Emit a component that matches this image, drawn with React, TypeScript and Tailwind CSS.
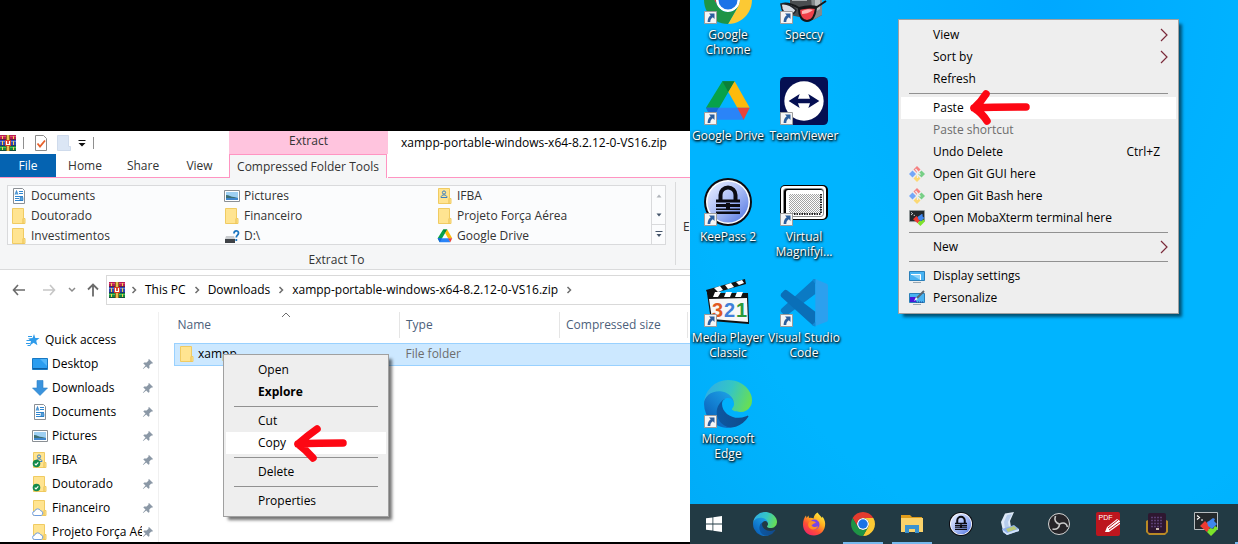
import React from "react";

type Children = { children?: React.ReactNode };

/* ---------- brand drawings ---------- */

function ChromeLogo({ className }: { className: string }) {
  return (
    <svg viewBox="0 0 48 48" className={className} aria-hidden="true">
      <circle cx="24" cy="24" r="12" fill="#fff" />
      <path d="M24 12h20.78a24 24 0 0 0-41.56 0L13.6 30A12 12 0 0 1 24 12z" fill="#e33b2e" />
      <circle cx="24" cy="24" r="9.5" fill="#1a73e8" />
      <path d="M34.39 30 24 48a24 24 0 0 0 20.78-36H24a12 12 0 0 1 10.39 18z" fill="#fcc934" />
      <path d="M13.6 30 3.22 12A24 24 0 0 0 24 48l10.39-18a12 12 0 0 1-20.78 0z" fill="#1e9445" />
    </svg>
  );
}

function EdgeLogo({ className }: { className: string }) {
  const id = React.useId();
  return (
    <svg viewBox="0 0 256 256" className={className} aria-hidden="true">
      <defs>
        <linearGradient id={id + "a"} x1="63" y1="178" x2="241" y2="178" gradientUnits="userSpaceOnUse">
          <stop offset="0" stopColor="#0c59a4" />
          <stop offset="1" stopColor="#114a8b" />
        </linearGradient>
        <linearGradient id={id + "b"} x1="157" y1="100" x2="46" y2="220" gradientUnits="userSpaceOnUse">
          <stop offset="0" stopColor="#1b9de2" />
          <stop offset=".5" stopColor="#1482d3" />
          <stop offset="1" stopColor="#0b66bd" />
        </linearGradient>
        <linearGradient id={id + "c"} x1="10" y1="60" x2="250" y2="150" gradientUnits="userSpaceOnUse">
          <stop offset="0" stopColor="#30aee5" />
          <stop offset=".5" stopColor="#35c6c4" />
          <stop offset="1" stopColor="#6ce04c" />
        </linearGradient>
      </defs>
      <g transform="translate(-4.6 -4.9)">
        <path fill={`url(#${id}a)`} d="M235.7 195.5a94 94 0 0 1-10.6 4.7 102 102 0 0 1-35.9 6.4c-47.3 0-88.5-32.5-88.5-74.3a31.5 31.5 0 0 1 16.4-27.2c-42.8 1.8-53.8 46.4-53.8 72.5 0 73.9 68.1 81.4 82.8 81.4 7.9 0 19.8-2.3 27-4.6l1.3-.4a128 128 0 0 0 66.6-52.8 4 4 0 0 0-5.3-5.7z" />
        <path fill={`url(#${id}b)`} d="M110.3 246.3A79 79 0 0 1 87.6 225a80.7 80.7 0 0 1 29.5-119.9c3.1-1.4 8.5-4.1 15.6-4a32.4 32.4 0 0 1 25.7 13 31.9 31.9 0 0 1 6.3 18.7c0-.2 24.5-79.6-80-79.6-43.9 0-80 41.7-80 78.2a130 130 0 0 0 12.1 56 128 128 0 0 0 156.4 67.1 75.6 75.6 0 0 1-62.8-8z" />
        <path fill={`url(#${id}c)`} d="M156.9 153.8c-.8 1-3.3 2.5-3.3 5.6 0 2.7 1.7 5.2 4.8 7.3 14.3 10 41.4 8.7 41.5 8.7a59.6 59.6 0 0 0 30.3-8.4 61.4 61.4 0 0 0 30.4-52.9c.3-22.4-8-37.3-11.3-43.9C228.1 28.8 182.4 4.9 132.6 4.9a128 128 0 0 0-128 126.2c.5-36.5 36.8-66 80-66 3.5 0 23.5.3 42 10 16.4 8.6 24.900 19 30.900 29.300 6.100 10.600 7.200 24.100 7.200 29.500s-2.700 13.300-7.800 19.900z" />
      </g>
    </svg>
  );
}

function DriveLogo({ className }: { className: string }) {
  return (
    <svg viewBox="0 0 144 144" className={className} aria-hidden="true">
      <path d="M55 13h37L73 45 25 128 6 92z" fill="#07a24a" />
      <path d="M55 13h37L73 45z" fill="#0b8038" />
      <path d="M92 13l45 79h-37L73 45z" fill="#fdba0b" />
      <path d="M6 92h98l16 36H25z" fill="#2a84f8" />
      <path d="M100 92h37l-18 36z" fill="#e9443a" />
      <path d="M6 92h38l-19 36z" fill="#1769d6" />
    </svg>
  );
}

function KeePassLogo({ className }: { className: string }) {
  const id = React.useId();
  return (
    <svg viewBox="0 0 48 48" className={className} aria-hidden="true">
      <defs>
        <linearGradient id={id} x1="0" y1="0" x2="1" y2="1">
          <stop offset="0" stopColor="#eef2ff" />
          <stop offset=".5" stopColor="#a9bcf6" />
          <stop offset="1" stopColor="#4f73e0" />
        </linearGradient>
      </defs>
      <circle cx="24" cy="24" r="24" fill="#0b0b12" />
      <circle cx="24" cy="24" r="22" fill="#fff" />
      <circle cx="24" cy="24" r="20.5" fill={`url(#${id})`} />
      <path d="M16.5 22v-5a7.5 7.5 0 0 1 15 0v5" fill="none" stroke="#0b0b12" strokeWidth="4" />
      <path d="M12 21.5h24v3H12zM12 26h10v3H12zM26 26h10v3H26zM12 30.5h24v1.5H12zM12 33.5h24v2.5H12zM22 25h4v6h-4z" fill="#0b0b12" />
    </svg>
  );
}

function SpeccyLogo({ className }: { className: string }) {
  return (
    <svg viewBox="0 0 48 48" className={className} aria-hidden="true">
      <path d="M10 6h24l8 6v27l-9 5-23-5z" fill="#4a4d50" />
      <path d="M30 10l12 2v27l-9 5z" fill="#85898c" />
      <path d="M12 16h15v4H12zM12 23h15v2H12z" fill="#a7abae" />
      <path d="M35 14l5 1v18l-5 3z" fill="#b9bcbe" />
      <path d="M2 28c4-1 10 0 17 4 7-2 14-2 18-1l9-6" fill="none" stroke="#17191c" strokeWidth="2" />
      <path d="M1 28c5-1 10 1 15 6-2 6-12 5-14-1z" fill="#d7dde6" stroke="#20242a" strokeWidth="1.5" />
      <path d="M19 33c7-2 12-2 17-1-1 8-4 13-9 13s-8-5-8-12z" fill="#f0404a" stroke="#15171a" strokeWidth="2" />
      <path d="M22 35c5-2 8-2 11-1-4 3-8 4-11 4z" fill="#ffb7b7" />
    </svg>
  );
}

function TeamViewerLogo({ className }: { className: string }) {
  return (
    <svg viewBox="0 0 144 144" className={className} aria-hidden="true">
      <rect width="144" height="144" rx="14" fill="#050f52" />
      <circle cx="72" cy="72" r="59" fill="#fff" />
      <path d="M26 72l33-21-5 14h36l-5-14 33 21-33 21 5-14H54l5 14z" fill="#050f52" />
    </svg>
  );
}

function MagnifierLogo({ className }: { className: string }) {
  const id = React.useId();
  return (
    <svg viewBox="0 0 48 48" className={className} aria-hidden="true">
      <defs>
        <pattern id={id} width="2" height="2" patternUnits="userSpaceOnUse">
          <path d="M0 0h1v1H0zM1 1h1v1H1z" fill="#a3a3a3" />
        </pattern>
      </defs>
      <rect x="0" y="7" width="48" height="35" rx="5" fill="#000" />
      <rect x="1" y="8" width="45" height="33" rx="4" fill="#fff" />
      <rect x="3" y="10" width="41" height="29" rx="4" fill="#8d8d8d" />
      <rect x="4" y="11" width="39" height="27" rx="3" fill="#000" />
      <rect x="6" y="12" width="37" height="26" rx="2" fill="#fff" />
      <rect x="9" y="16" width="32" height="20" fill={`url(#${id})`} />
      <path d="M9 36h32M41 16v20" stroke="#222" strokeWidth="2" strokeDasharray="1.5 1" />
    </svg>
  );
}

function ClapperLogo({ className }: { className: string }) {
  return (
    <svg viewBox="0 0 48 48" className={className} aria-hidden="true">
      <path d="M2 11L41 0l1 5L4 16z" fill="#111" />
      <path d="M10 9l6-2 3 4-5 2zM21 6l6-2 3 4-6 2zM32 3l6-2 2 3-5 2z" fill="#fff" />
      <path d="M3 14h41l1 31-38-3z" fill="#111" />
      <path d="M11 13h6l-3 5h-5zM22 13h6l-2 5h-6zM33 13h6l-2 5h-6z" fill="#fff" />
      <path d="M5 20l38-1 1 24-36-3z" fill="#f7f7f7" />
      <g fontFamily="Liberation Sans, sans-serif" fontWeight="700" fontSize="20">
        <text x="8" y="38" fill="#e0591f">3</text>
        <text x="20" y="38" fill="#3f7fd8">2</text>
        <text x="32" y="38" fill="#2b9a3a">1</text>
      </g>
    </svg>
  );
}

function CodeLogo({ className }: { className: string }) {
  return (
    <svg viewBox="0 0 144 144" className={className} aria-hidden="true">
      <path d="M3 98l10 11q4 3 8 0L106 45V0q-4 0-8 4L4 89q-4 5-1 9z" fill="#0b7ac4" />
      <path d="M3 44l10-10q4-3 8 0l85 64v44q-5 0-9-4L4 54q-4-5-1-10z" fill="#0a6fb8" />
      <path d="M106 0l34 14q4 2 4 6v102q0 4-4 6l-34 13z" fill="#2ca0ee" />
      <path d="M97 3q5-4 9-3v142q-6 0-10-4l10-10V14z" fill="#1389d6" />
    </svg>
  );
}

function FirefoxLogo({ className }: { className: string }) {
  const id = React.useId();
  return (
    <svg viewBox="0 0 48 48" className={className} aria-hidden="true">
      <defs>
        <linearGradient id={id} x1=".85" y1=".05" x2=".2" y2="1">
          <stop offset="0" stopColor="#fff044" />
          <stop offset=".35" stopColor="#ffae1f" />
          <stop offset=".65" stopColor="#ff5233" />
          <stop offset="1" stopColor="#f0206b" />
        </linearGradient>
      </defs>
      <path d="M31 1c3 5 6 6 9 11l1-3c5 7 6 13 5 19C44 40 35 47 24 47 11 47 2 38 2 25 2 17 5 10 8 7l1 5 4-5 1 5c4-1 7 0 9 1 1-6 4-10 8-12z" fill={`url(#${id})`} />
      <circle cx="25" cy="25" r="10" fill="#7a45e6" />
      <path d="M14 20c5-4 12-2 14 2-5 0-5 3-9 4 2 5 9 5 13 2-1 6-8 9-14 6-6-3-7-9-4-14z" fill="#ff9222" />
    </svg>
  );
}

/* ---------- small shell icons ---------- */

function WinRar() {
  return (
    <svg viewBox="0 0 16 16" className="size-4 shrink-0" aria-hidden="true">
      <path d="M0 0h16v5H0z" fill="#b81d52" />
      <path d="M0 5h16v6H0z" fill="#2f49b0" />
      <path d="M0 11h16v5H0z" fill="#168a3c" />
      <path d="M0 1h16v1H0z" fill="#dd4a78" />
      <path d="M0 6h16v1H0z" fill="#6480dc" />
      <path d="M0 12h16v1H0z" fill="#4bbd62" />
      <path d="M0 4h16v1H0zM0 10h16v1H0zM0 15h16v1H0z" fill="#1c1d3a" opacity=".55" />
      <path d="M2 1h1v3H2zM2 6h1v4H2zM2 12h1v3H2zM13 1h1v3h-1zM13 6h1v4h-1zM13 12h1v3h-1z" fill="#f5d24a" />
      <path d="M6 0h4v16H6z" fill="#8f6420" />
      <path d="M7 0h2v16H7z" fill="#e9c04c" />
      <path d="M5 5h6v6H5z" fill="#d93a24" />
      <path d="M6.5 6v3.500h3V6" fill="none" stroke="#fff" strokeWidth="1.200" />
    </svg>
  );
}

function FolderShape({ children }: Children) {
  return (
    <svg viewBox="0 0 16 16" className="size-4 shrink-0" aria-hidden="true">
      <path d="M1.500.5h11v10h1.500v5h-12.500z" fill="#ffe491" stroke="#f0cb62" />
      <path d="M12 10.500v5" stroke="#e8bd4a" />
      {children}
    </svg>
  );
}

const SyncedBadge = () => (
  <>
    <circle cx="4.5" cy="11.5" r="3.8" fill="#138a4b" />
    <path d="M2.7 11.6l1.3 1.3 2.3-2.6" fill="none" stroke="#fff" strokeWidth="1.1" />
  </>
);

const CloudBadge = () => (
  <path d="M2.8 15.5a2.1 2.1 0 0 1-.2-4.2 3.2 3.2 0 0 1 6-.6 2.5 2.5 0 0 1 .6 4.8z" fill="#fff" stroke="#6f9de0" />
);

const PersonMark = () => (
  <>
    <circle cx="7" cy="4.5" r="1.6" fill="none" stroke="#3a7fc4" />
    <path d="M4 9.500c0-3.500 6-3.500 6 0z" fill="none" stroke="#3a7fc4" />
  </>
);

function DocumentIcon() {
  return (
    <svg viewBox="0 0 16 16" className="size-4 shrink-0" aria-hidden="true">
      <path d="M2.5.5h9l2 2v13h-11z" fill="#fff" stroke="#8a8f94" />
      <path d="M8 3.5h4M8 5.500h4M4 8.500h8M4 10.500h4M4 12.500h8" stroke="#2f86cf" />
      <path d="M4 6.500l1.500-4L7 6.500M9 9.500h3v3H9z" fill="#59a5df" stroke="#1f6fb8" strokeWidth=".6" />
    </svg>
  );
}

function PictureIcon() {
  return (
    <svg viewBox="0 0 16 16" className="size-4 shrink-0" aria-hidden="true">
      <path d="M.5 2.5h15v11H.5z" fill="#fff" stroke="#8a8f94" />
      <path d="M2 4h12v8H2z" fill="#9ed0f3" />
      <path d="M2 7c3 0 5 2 8 2l4 1v2H2z" fill="#3c6f74" />
      <path d="M2 10h12v2H2z" fill="#3f86cc" />
    </svg>
  );
}

function DesktopIcon() {
  return (
    <svg viewBox="0 0 16 16" className="size-4 shrink-0" aria-hidden="true">
      <path d="M.5 2.5h15v11H.5z" fill="#2a9df0" stroke="#1878c2" />
      <path d="M8 3h7v7z" fill="#51b6fa" />
      <path d="M1 12.500h14" stroke="#0d5da0" />
    </svg>
  );
}

function DownloadIcon() {
  return (
    <svg viewBox="0 0 16 16" className="size-4 shrink-0" aria-hidden="true">
      <path d="M5 .5h6V8h4.5L8 15.5.5 8H5z" fill="#3a93dd" stroke="#2b7fc6" strokeWidth=".6" />
    </svg>
  );
}

function UnknownDriveIcon() {
  return (
    <svg viewBox="0 0 16 16" className="size-4 shrink-0" aria-hidden="true">
      <path d="M2 8h8l1 3H1z" fill="#c9cccf" />
      <path d="M1 11h10v4H1z" fill="#3e4246" />
      <path d="M10 5.500c0-3.500 4.500-3.500 4.500-.5 0 2.200-2.200 2-2.200 4.500M12.300 11v2" fill="none" stroke="#1d76c0" strokeWidth="1.800" />
    </svg>
  );
}

function StarIcon() {
  return (
    <svg viewBox="0 0 16 16" className="size-4 shrink-0" aria-hidden="true">
      <path d="M9 2l1.300 3.900 4.200.1-3.300 2.700 1.200 4.600-3.800-2.500-3.800 2.700 1.200-4.500L3 6.400l4.600-.3z" fill="#2e9bea" />
      <path d="M3 4.500h4M1.500 8.500H6M1 11.500h4M2.500 13.500h3" stroke="#2e9bea" />
    </svg>
  );
}

function PinIcon() {
  return (
    <svg viewBox="0 0 12 12" className="size-3 shrink-0" aria-hidden="true">
      <path d="M7 1l4 4-1 .8-.7-.2-2 2 .2 2.4-1 .8-2.300-2.300L1.200 11l-.4-.3L3.500 7.600 1.300 5.400l.9-1 2.400.2 2-2L6.300 1.800z" fill="#8b98a6" />
    </svg>
  );
}

function GitIcon() {
  return (
    <svg viewBox="0 0 16 16" className="size-4" aria-hidden="true">
      <path d="M8 0l3.500 3.500L8 7 4.500 3.500z" fill="#f58080" />
      <path d="M12.500 4.500L16 8l-3.500 3.500L9 8z" fill="#77cf86" />
      <path d="M3.500 4.500L7 8l-3.500 3.500L0 8z" fill="#74a6f7" />
      <path d="M8 9l3.500 3.500L8 16l-3.500-3.500z" fill="#fbd873" />
      <path d="M6.500 3l3 3.500M8.500 5v7M8.500 6l3 2.500" stroke="#eee" strokeWidth="1.300" />
    </svg>
  );
}

function MobaIcon({ className }: { className: string }) {
  return (
    <svg viewBox="0 0 24 24" className={className} aria-hidden="true">
      <path d="M.5.500h23v17H.5z" fill="#24292c" stroke="#b6bcbf" />
      <path d="M3 3.500l2.500 2L3 7.500M7 8h2" fill="none" stroke="#fff" strokeWidth="1.200" />
      <path d="M6 14l5-5 2 2 2-1 2 4-4 6z" fill="#ee3a31" />
      <path d="M13 10l2-1 4-3 2 1-1 2 3 3-5 5-4-3z" fill="#3f86ee" />
      <path d="M13 20l3-4 3 1 2-3 3 2-2 3-5 5z" fill="#7be32a" />
    </svg>
  );
}

function DisplayIcon({ brush }: { brush?: boolean }) {
  return (
    <svg viewBox="0 0 16 16" className="size-4" aria-hidden="true">
      <path d="M.5 3.500h15v9H.5z" fill="#49b3f2" stroke="#2b7fb8" />
      <path d="M4 14.500h8" stroke="#9aa7b2" />
      {brush ? (
        <>
          <path d="M1 7h6v5H1z" fill="#4b16d8" />
          <path d="M7 12h8" stroke="#1c3f8f" strokeDasharray="1 1" />
          <path d="M5 11l2-4 2 2z" fill="#eef6fb" />
          <path d="M8 8l7-7" stroke="#5c6670" strokeWidth="2" />
        </>
      ) : (
        <path d="M2 6.500h9.500V12" fill="#8fd3fa" stroke="#fff" />
      )}
    </svg>
  );
}

function Chevron() {
  return (
    <svg viewBox="0 0 6 8" className="h-2 w-1.5 shrink-0" aria-hidden="true">
      <path d="M1.500 1l3 3-3 3" fill="none" stroke="#6d6d6d" strokeWidth="1.500" />
    </svg>
  );
}

const COPY_ARROW = "M27 6Q17 13 8 21q8 6 15 14M8 21q20-1 45-1";
const PASTE_ARROW = "M21 6Q16 14 9 20q8 5 13 13M9 20q20-1 52-1";

function RedArrow({ d }: { d: string }) {
  return (
    <svg viewBox="0 0 68 40" className="absolute left-16 h-10 w-[68px]" aria-hidden="true">
      <path d={d} fill="none" stroke="#fd0713" strokeWidth="7.500" strokeLinecap="round" strokeLinejoin="round" />
    </svg>
  );
}

/* ---------- menus ---------- */

type MenuEntry = {
  label: string;
  icon?: React.ReactNode;
  shortcut?: string;
  submenu?: boolean;
  disabled?: boolean;
  strong?: boolean;
  arrow?: string;
};

function ContextMenu({ groups, label }: { groups: MenuEntry[][]; label: string }) {
  return (
    <div role="menu" aria-label={label} className="border border-[#a0a0a0] bg-[#eee] px-0.5 py-1 text-black shadow-[4px_4px_3px_-1px_rgba(0,0,0,0.55)]">
      {groups.map((group, g) => (
        <React.Fragment key={g}>
          {g > 0 && (
            <div role="separator" className="mx-2 flex h-[7px] items-center">
              <div className="h-px w-full bg-[#919191]" />
            </div>
          )}
          {group.map((item) => (
            <button
              key={item.label}
              role="menuitem"
              disabled={item.disabled}
              className={
                "relative flex h-[22px] w-full items-center pr-2 pl-2 text-left hover:bg-white disabled:text-[#6d6d6d] " +
                (item.arrow ? "bg-white " : "") +
                (item.strong ? "font-bold" : "")
              }
            >
              <span className="w-6 shrink-0">{item.icon}</span>
              <span className="whitespace-nowrap">{item.label}</span>
              {item.arrow && <RedArrow d={item.arrow} />}
              {item.shortcut && <span className="mr-2 ml-auto">{item.shortcut}</span>}
              {item.submenu && (
                <svg viewBox="0 0 8 14" className="ml-auto h-3.5 w-2" aria-hidden="true">
                  <path d="M1 1l6 6-6 6" fill="none" stroke="#7a2a3a" strokeWidth="1.200" />
                </svg>
              )}
            </button>
          ))}
        </React.Fragment>
      ))}
    </div>
  );
}

const fileMenu: MenuEntry[][] = [
  [{ label: "Open" }, { label: "Explore", strong: true }],
  [{ label: "Cut" }, { label: "Copy", arrow: COPY_ARROW }],
  [{ label: "Delete" }],
  [{ label: "Properties" }],
];

const desktopMenu: MenuEntry[][] = [
  [{ label: "View", submenu: true }, { label: "Sort by", submenu: true }, { label: "Refresh" }],
  [
    { label: "Paste", arrow: PASTE_ARROW },
    { label: "Paste shortcut", disabled: true },
    { label: "Undo Delete", shortcut: "Ctrl+Z" },
    { label: "Open Git GUI here", icon: <GitIcon /> },
    { label: "Open Git Bash here", icon: <GitIcon /> },
    { label: "Open MobaXterm terminal here", icon: <MobaIcon className="size-4" /> },
  ],
  [{ label: "New", submenu: true }],
  [
    { label: "Display settings", icon: <DisplayIcon /> },
    { label: "Personalize", icon: <DisplayIcon brush /> },
  ],
];

/* ---------- explorer window ---------- */

function RibbonHeader() {
  return (
    <header className="flex h-[47px] bg-white text-[#333]">
      <div className="flex w-[229px] shrink-0 flex-col border-b border-[#ff94c2]">
        <div className="flex h-[23px] items-center">
          <WinRar />
          <span className="ml-[7px] h-3 w-px bg-[#8f8f8f]" />
          <button aria-label="Properties" className="ml-[11px]">
            <svg viewBox="0 0 12 16" className="h-4 w-3" aria-hidden="true">
              <path d="M.5.500h8l3 3v12H.5z" fill="#fff" stroke="#8c8c8c" />
              <path d="M2.500 8.500l2.500 3 5-6" fill="none" stroke="#e8612a" strokeWidth="1.800" />
            </svg>
          </button>
          <button aria-label="New folder" className="ml-2.5">
            <svg viewBox="0 0 14 16" className="h-4 w-3.5" aria-hidden="true">
              <path d="M.5.500h11v11h2v4H.5z" fill="#dbe6f5" stroke="#cfdbec" />
            </svg>
          </button>
          <button aria-label="Customize quick access" className="ml-[7px]">
            <svg viewBox="0 0 8 8" className="size-2" aria-hidden="true">
              <path d="M.5 1h7v1h-7zM.5 4h7L4 7.500z" fill="#111" />
            </svg>
          </button>
          <span className="ml-[7px] h-3 w-px bg-[#8f8f8f]" />
        </div>
        <nav className="flex h-[23px]">
          <button className="w-14 bg-[#0563b1] text-white">File</button>
          <button className="w-[58px]">Home</button>
          <button className="w-[58px]">Share</button>
          <button className="w-[55px]">View</button>
        </nav>
      </div>
      <div className="flex w-[159px] shrink-0 flex-col">
        <div className="h-[23px] bg-[#ffc4de] text-center leading-5">Extract</div>
        <button className="mr-px flex-1 border border-b-0 border-[#ff94c2] bg-[#f5f6f7] whitespace-nowrap">Compressed Folder Tools</button>
      </div>
      <div className="min-w-0 flex-1 border-b border-[#ff94c2] pl-[13px]">
        <h1 className="truncate leading-6 text-black">xampp-portable-windows-x64-8.2.12-0-VS16.zip</h1>
      </div>
    </header>
  );
}

const gallery: { label: string; icon: React.ReactNode }[] = [
  { label: "Documents", icon: <DocumentIcon /> },
  { label: "Pictures", icon: <PictureIcon /> },
  { label: "IFBA", icon: <FolderShape><PersonMark /></FolderShape> },
  { label: "Doutorado", icon: <FolderShape /> },
  { label: "Financeiro", icon: <FolderShape /> },
  { label: "Projeto Força Aérea", icon: <FolderShape /> },
  { label: "Investimentos", icon: <FolderShape /> },
  { label: "D:\\", icon: <UnknownDriveIcon /> },
  { label: "Google Drive", icon: <DriveLogo className="size-4 shrink-0" /> },
];

function Ribbon() {
  return (
    <section className="flex h-[92px] border-b border-[#dadbdc] bg-[#f5f6f7] pl-[7px] text-[#333]">
      <div className="flex min-w-0 flex-1 flex-col pt-[7px] pr-[9px]">
        <div className="flex h-[60px] border border-[#d9dadc] bg-[#fbfcfd]">
          <div className="grid flex-1 grid-cols-3 grid-rows-[20px_20px_20px] pr-1">
            {gallery.map((g) => (
              <button key={g.label} className="flex items-center gap-1 pl-[3px] text-left">
                {g.icon}
                {g.label}
              </button>
            ))}
          </div>
          <div className="flex w-3.5 flex-col border-l border-[#d9dadc]">
            <button aria-label="Scroll up" className="flex flex-1 items-center justify-center">
              <svg viewBox="0 0 6 4" className="h-1 w-1.5"><path d="M.5 3.500h5L3 .5z" fill="#b0b4ba" /></svg>
            </button>
            <button aria-label="Scroll down" className="flex flex-1 items-center justify-center">
              <svg viewBox="0 0 6 4" className="h-1 w-1.5"><path d="M.5.500h5L3 3.500z" fill="#44546a" /></svg>
            </button>
            <button aria-label="More" className="flex flex-1 items-center justify-center border-t border-[#d9dadc]">
              <svg viewBox="0 0 8 7" className="h-[7px] w-2"><path d="M.5 0h7v1h-7zM1.500 3h5L4 6z" fill="#44546a" /></svg>
            </button>
          </div>
        </div>
        <div className="flex h-[25px] items-center justify-center pt-1.5">Extract To</div>
      </div>
      <div className="mt-1 mb-1 flex w-[15px] shrink-0 items-center border-l border-[#dadbdc] pl-[7px]">
        <button aria-label="Extract all" className="pt-1.5">E</button>
      </div>
    </section>
  );
}

function AddressBar() {
  return (
    <div className="flex items-center pt-[5px]">
      <button aria-label="Back" className="ml-3">
        <svg viewBox="0 0 14 12" className="h-3 w-3.5"><path d="M6 1L1.500 6 6 11M1.500 6H13" fill="none" stroke="#6b6b6b" strokeWidth="1.600" /></svg>
      </button>
      <button aria-label="Forward" className="ml-4">
        <svg viewBox="0 0 14 12" className="h-3 w-3.5"><path d="M8 1l4.500 5L8 11M12.500 6H1" fill="none" stroke="#c6c6c6" strokeWidth="1.600" /></svg>
      </button>
      <button aria-label="Recent locations" className="ml-3">
        <svg viewBox="0 0 8 6" className="h-1.5 w-2"><path d="M1 1l3 3 3-3" fill="none" stroke="#8a8a8a" strokeWidth="1.500" /></svg>
      </button>
      <button aria-label="Up" className="ml-2.5">
        <svg viewBox="0 0 14 14" className="size-3.5"><path d="M2 6.500l5-5 5 5M7 2v11.500" fill="none" stroke="#6b6b6b" strokeWidth="1.800" /></svg>
      </button>
      <nav aria-label="Path" className="ml-1.5 flex h-[30px] min-w-0 flex-1 items-center border border-r-0 border-[#d9d9d9] pl-0.5 whitespace-nowrap text-black">
        <WinRar />
        <span className="ml-1.5"><Chevron /></span>
        <a href="#pc" className="ml-2">This PC</a>
        <span className="ml-2"><Chevron /></span>
        <a href="#downloads" className="ml-2">Downloads</a>
        <span className="ml-2"><Chevron /></span>
        <a href="#zip" className="ml-2">xampp-portable-windows-x64-8.2.12-0-VS16.zip</a>
        <span className="ml-2"><Chevron /></span>
      </nav>
    </div>
  );
}

const places: { label: string; icon: React.ReactNode }[] = [
  { label: "Desktop", icon: <DesktopIcon /> },
  { label: "Downloads", icon: <DownloadIcon /> },
  { label: "Documents", icon: <DocumentIcon /> },
  { label: "Pictures", icon: <PictureIcon /> },
  { label: "IFBA", icon: <FolderShape><PersonMark /><SyncedBadge /></FolderShape> },
  { label: "Doutorado", icon: <FolderShape><SyncedBadge /></FolderShape> },
  { label: "Financeiro", icon: <FolderShape><CloudBadge /></FolderShape> },
  { label: "Projeto Força Aérea", icon: <FolderShape><CloudBadge /></FolderShape> },
];

function Sidebar() {
  return (
    <nav aria-label="Quick access" className="w-[159px] shrink-0 overflow-hidden border-r border-[#f0f0f0] pt-4 pr-1 text-black">
      <a href="#quick" className="flex h-6 items-center gap-1 pl-[25px]">
        <StarIcon />
        Quick access
      </a>
      {places.map((p) => (
        <a key={p.label} href="#place" className="flex h-6 items-center pl-8">
          {p.icon}
          <span className="ml-1 min-w-0 flex-1 overflow-hidden whitespace-nowrap">{p.label}</span>
          <PinIcon />
        </a>
      ))}
    </nav>
  );
}

function FileList() {
  return (
    <div className="relative min-w-0 flex-1 pl-[15px]">
      <table className="w-full table-fixed border-collapse text-left">
        <colgroup>
          <col className="w-[225px]" />
          <col className="w-[160px]" />
          <col className="w-[128px]" />
          <col />
        </colgroup>
        <thead className="text-[#4c607a]">
          <tr className="h-[26px]">
            <th className="relative border-r border-[#e5e5e5] p-0 pl-[3px] font-normal">
              Name
              <svg viewBox="0 0 10 6" className="absolute top-0 left-[106px] h-1.5 w-2.5" aria-hidden="true">
                <path d="M1 5l4-4 4 4" fill="none" stroke="#6d6d6d" />
              </svg>
            </th>
            <th className="border-r border-[#e5e5e5] p-0 pl-1.5 font-normal">Type</th>
            <th className="border-r border-[#e5e5e5] p-0 pl-1.5 font-normal">Compressed size</th>
            <th className="p-0" />
          </tr>
        </thead>
        <tbody>
          <tr className="h-[5px]" aria-hidden="true"><td className="p-0" colSpan={4} /></tr>
          <tr className="h-[22px] border-y border-[#99d1ff] bg-[#cce8ff]">
            <td className="border-l border-[#99d1ff] p-0 pl-1 text-black">
              <span className="flex items-center gap-[3px]">
                <FolderShape />
                xampp
              </span>
            </td>
            <td className="p-0 pl-1.5 text-[#6d6d6d]">File folder</td>
            <td className="p-0" />
            <td className="p-0" />
          </tr>
        </tbody>
      </table>
      <div className="absolute top-[42px] left-16 w-[166px]">
        <ContextMenu groups={fileMenu} label="File actions" />
      </div>
    </div>
  );
}

function Explorer() {
  return (
    <main className="flex min-h-0 flex-1 flex-col bg-white">
      <RibbonHeader />
      <Ribbon />
      <AddressBar />
      <div className="flex min-h-0 flex-1 pt-[7px]">
        <Sidebar />
        <FileList />
      </div>
    </main>
  );
}

/* ---------- desktop ---------- */

const shortcuts: { label: string; logo: React.ReactNode; column: string }[] = [
  { label: "Google Chrome", logo: <ChromeLogo className="size-12" />, column: "col-start-1" },
  { label: "Speccy", logo: <SpeccyLogo className="size-12" />, column: "col-start-2" },
  { label: "Google Drive", logo: <DriveLogo className="size-12" />, column: "col-start-1" },
  { label: "TeamViewer", logo: <TeamViewerLogo className="size-12" />, column: "col-start-2" },
  { label: "KeePass 2", logo: <KeePassLogo className="size-12" />, column: "col-start-1" },
  { label: "Virtual Magnifyi...", logo: <MagnifierLogo className="size-12" />, column: "col-start-2" },
  { label: "Media Player Classic", logo: <ClapperLogo className="size-12" />, column: "col-start-1" },
  { label: "Visual Studio Code", logo: <CodeLogo className="size-12" />, column: "col-start-2" },
  { label: "Microsoft Edge", logo: <EdgeLogo className="size-12" />, column: "col-start-1" },
];

function Desktop() {
  return (
    <div className="relative min-h-0 flex-1 overflow-hidden bg-[radial-gradient(ellipse_at_65%_0%,#00a8ff_0%,#00b4ff_45%,#00b4ff_75%,#00acf8_100%)]">
      <div className="-mt-6 grid w-[152px] auto-rows-[101px] grid-cols-2">
        {shortcuts.map((s) => (
          <a key={s.label} href="#open" className={"flex flex-col items-center text-white " + s.column}>
            <span className="relative">
              {s.logo}
              <svg viewBox="0 0 13 13" className="absolute bottom-0 left-0 size-[13px]" aria-hidden="true">
                <path d="M.5.500h12v12H.5z" fill="#f5f5f5" stroke="#9c9c9c" />
                <path d="M5 2.500h5.500V8L8.800 6.300C7 7.500 6.300 9 6.300 11H3.600c0-3 1-5 3.100-6.700z" fill="#2c5f9e" />
              </svg>
            </span>
            <span className="mt-[3px] text-center leading-[15px] [text-shadow:1px_1px_2px_#000,0_1px_3px_#000]">{s.label}</span>
          </a>
        ))}
      </div>
      <div className="absolute top-[19px] left-[208px] w-[281px]">
        <ContextMenu groups={desktopMenu} label="Desktop actions" />
      </div>
    </div>
  );
}

const tasks: { label: string; running?: boolean; icon?: React.ReactNode }[] = [
  { label: "Edge", icon: <EdgeLogo className="size-6" /> },
  { label: "Firefox", icon: <FirefoxLogo className="size-6" /> },
  { label: "Chrome", running: true, icon: <ChromeLogo className="size-6" /> },
  {
    label: "File Explorer",
    running: true,
    icon: (
      <svg viewBox="0 0 24 24" className="size-6" aria-hidden="true">
        <path d="M1 3h9l2 2h10v5H1z" fill="#e09c1a" />
        <path d="M1 6h22v14H1z" fill="#fbd36b" />
        <path d="M5 21v-8h14v8h-4v-4H9v4z" fill="#3b92cf" />
      </svg>
    ),
  },
  { label: "KeePass", icon: <KeePassLogo className="size-6" /> },
  {
    label: "Scanner",
    icon: (
      <svg viewBox="0 0 24 24" className="size-6" aria-hidden="true">
        <path d="M7 1.500L16 0l-4 9 1 6-8 4-2-9z" fill="#dfeaf8" />
        <path d="M9 3l5-1-4 8 1 5-4 2-1-7z" fill="#b7cdec" />
        <path d="M4 17l12-4 5 4v2L9 23l-4-3z" fill="#8fb2ee" />
        <path d="M8 17l8-3 3 3-9 3z" fill="#b9c978" />
        <path d="M5 18l4 3 12-4v2L9 23l-4-3z" fill="#d4e3fa" />
      </svg>
    ),
  },
  {
    label: "OBS",
    icon: (
      <svg viewBox="0 0 24 24" className="size-6" aria-hidden="true">
        <circle cx="12" cy="12" r="10.5" fill="#262428" stroke="#d5d5d5" />
        <g fill="none" stroke="#c9c9c9" strokeWidth="1.6">
          <path d="M12.5 12c-4-1-5.500-4-4-8" />
          <path d="M12.5 12c4-2 7-1 8 3" />
          <path d="M12.5 12c0 4-3 6-7 5" />
        </g>
      </svg>
    ),
  },
  {
    label: "PDF",
    icon: (
      <svg viewBox="0 0 24 24" className="size-6" aria-hidden="true">
        <rect width="24" height="24" rx="2" fill="#bd161e" />
        <text x="2.5" y="7.5" fontFamily="Liberation Sans, sans-serif" fontSize="7" fill="#fff">PDF</text>
        <path d="M9 20l2-5L21 7l3 2v3l-11 8z" fill="#fff" />
        <path d="M12 16l10-8M13 18l11-8" stroke="#bd161e" />
      </svg>
    ),
  },
  {
    label: "Calculator",
    icon: (
      <svg viewBox="0 0 24 24" className="size-6" aria-hidden="true">
        <path d="M1 9l2-1h18l2 1v11l-3 3H4l-3-3z" fill="#b98a26" />
        <rect x="3" y="1" width="18" height="20" rx="2" fill="#2e1730" />
        <path d="M6 5.500h12M6 8.500h12M6 11.500h12M6 14.500h12" stroke="#5a3f72" strokeWidth="1.5" strokeDasharray="2 1" />
        <path d="M11 17h3" stroke="#c9b8b0" strokeWidth="2" />
      </svg>
    ),
  },
  { label: "MobaXterm", icon: <MobaIcon className="size-6" /> },
  { label: "More windows", running: true },
];

function Taskbar() {
  return (
    <footer className="flex h-10 shrink-0 items-center overflow-hidden bg-[#223a44]">
      <button aria-label="Start" className="mr-0.5 flex w-12 shrink-0 justify-center">
        <svg viewBox="0 0 16 16" className="size-4" aria-hidden="true">
          <path d="M0 2.300l6.500-.9v6.200H0zM7.300 1.300L16 0v7.600H7.300zM0 8.400h6.500v6.200L0 13.700zM7.300 8.400H16V16l-8.700-1.300z" fill="#fff" />
        </svg>
      </button>
      {tasks.map((t) => (
        <button key={t.label} aria-label={t.label} className="relative flex h-10 w-[49px] shrink-0 items-center justify-center">
          {t.icon}
          {t.running && <span className="absolute bottom-0 h-0.5 w-10 bg-[#76b9ed]" />}
        </button>
      ))}
    </footer>
  );
}

export default function App() {
  return (
    <div className="grid h-screen grid-cols-[690fr_548fr] overflow-hidden bg-black font-['Open_Sans','Noto_Sans',sans-serif] text-xs">
      <div className="flex min-h-0 min-w-0 flex-col pt-[131px] pb-0.5">
        <Explorer />
      </div>
      <div className="flex min-h-0 min-w-0 flex-col">
        <Desktop />
        <Taskbar />
      </div>
    </div>
  );
}
